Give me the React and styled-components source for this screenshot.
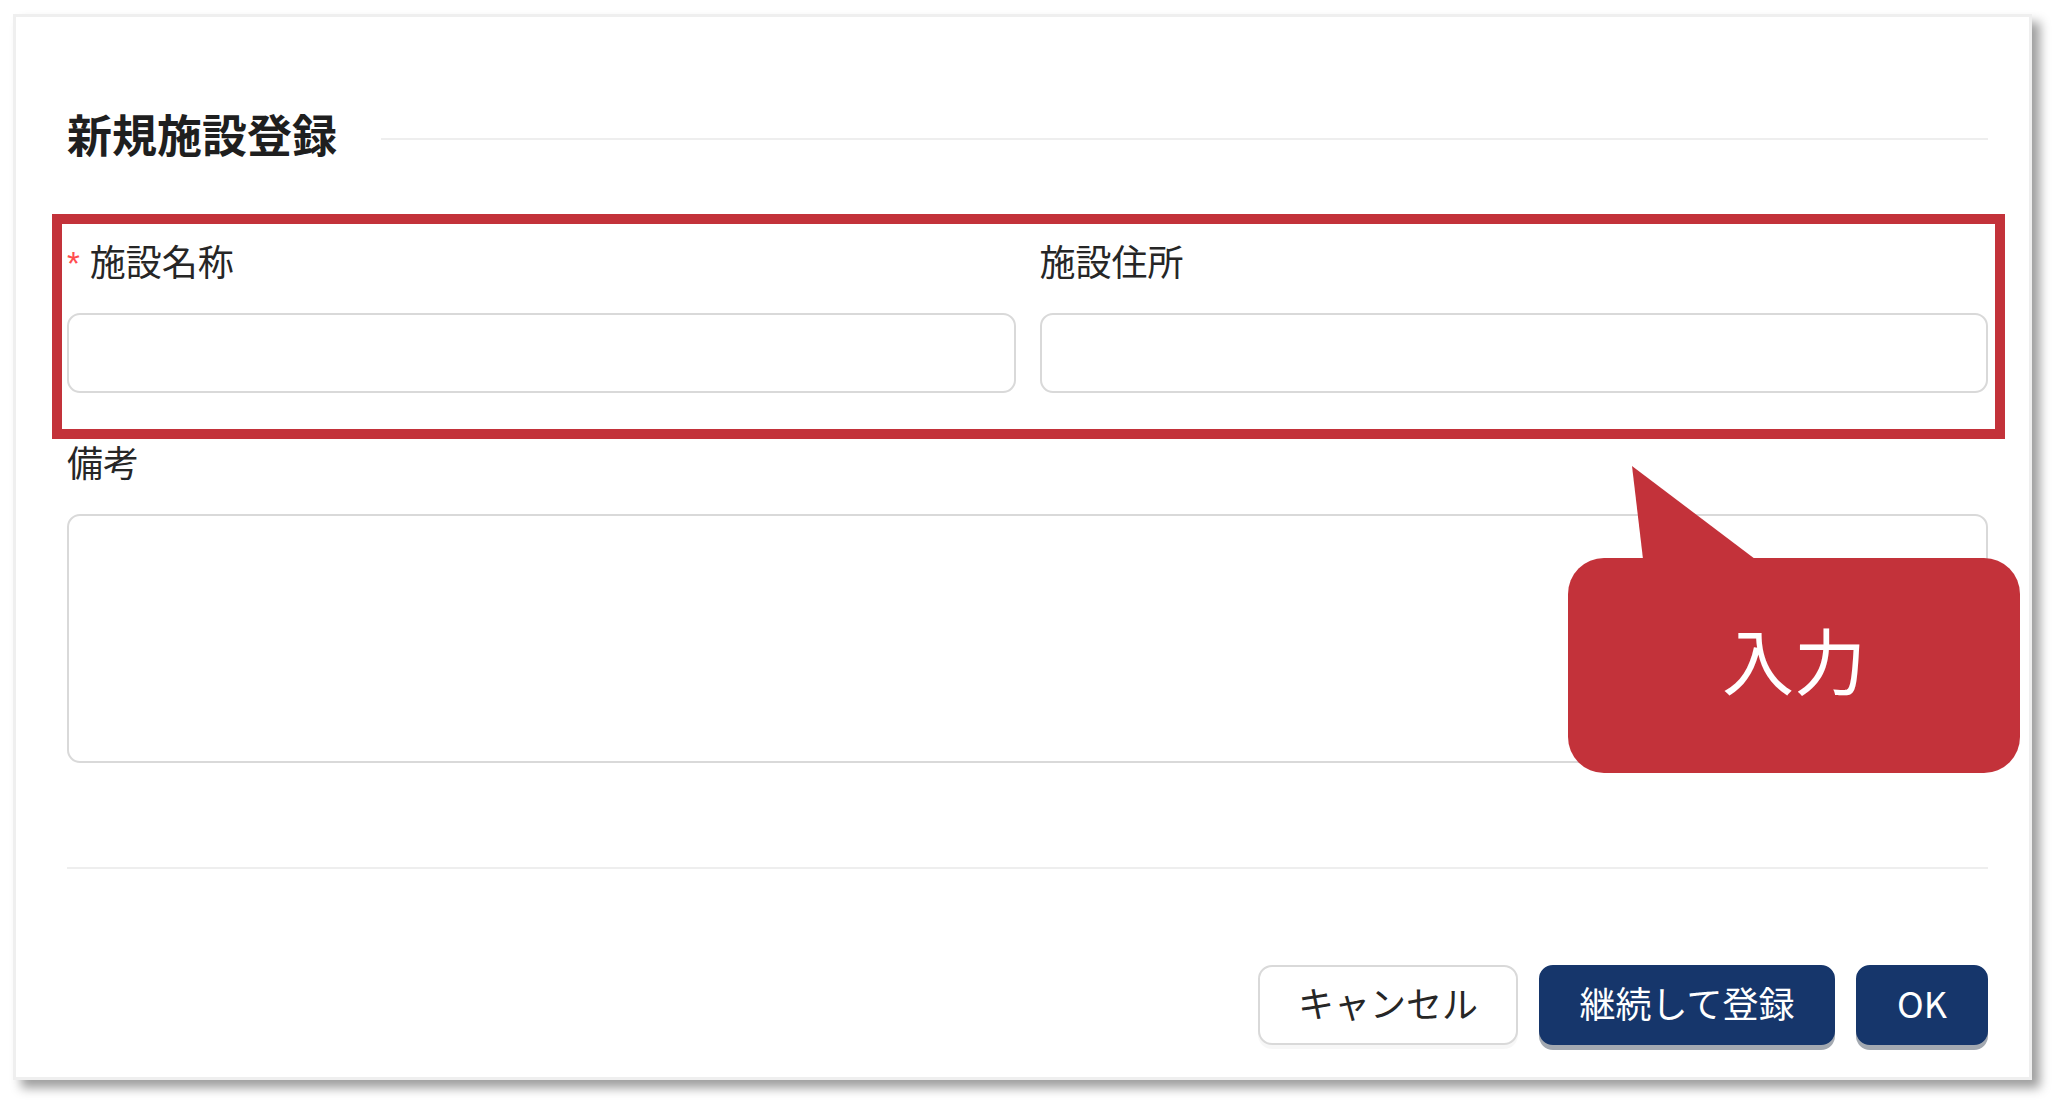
import React from 'react';
import styled, {createGlobalStyle} from 'styled-components';

const GlobalStyle = createGlobalStyle`
    html, body{
        margin: 0;
        padding: 0;
        background: #fff;
        overflow: hidden;
    }
    body{
        font-family: "Noto Sans CJK JP", "Noto Sans", sans-serif;
        color: #262626;
    }
    *{
        box-sizing: border-box;
    }
`;

const App = () =>{
    return(
        <>
            <GlobalStyle />
            <Page>
                <Card>
                    <Header>
                        <Title>新規施設登録</Title>
                        <Rule />
                    </Header>

                    <Highlight>
                        <Field>
                            <Label><Required>*</Required>施設名称</Label>
                            <Input type="text" />
                        </Field>
                        <Field>
                            <Label>施設住所</Label>
                            <Input type="text" />
                        </Field>
                    </Highlight>

                    <Field>
                        <NoteLabel>備考</NoteLabel>
                        <Note />
                    </Field>

                    <Divider />

                    <Footer>
                        <Button $w={260}>キャンセル</Button>
                        <Button $primary $w={296}>継続して登録</Button>
                        <Button $primary $w={132}>OK</Button>
                    </Footer>

                    <Callout>入力</Callout>
                </Card>
            </Page>
        </>
    )
}

const Page = styled.div`
    width: 2062px;
    height: 1113px;
    padding: 14px 0 0 13px;
`;

const Card = styled.div`
    position: relative;
    width: 2019px;
    padding: 97px 41px 32px 51px;
    background: #fff;
    border: 3px solid #efefef;
    box-shadow: 8px 8px 10px rgba(0,0,0,0.38);
`;

const Header = styled.div`
    display: flex;
    align-items: center;
`;

const Title = styled.h2`
    margin: 0;
    height: 44px;
    font-size: 45px;
    line-height: 40px;
    font-weight: 700;
    color: #1f1f1f;
    white-space: nowrap;
`;

const Rule = styled.div`
    flex: 1;
    height: 2px;
    margin: 6px 0 0 44px;
    background: #eeeeee;
`;

//the red frame round the first row
const Highlight = styled.div`
    display: grid;
    grid-template-columns: 1fr 1fr;
    column-gap: 24px;
    margin: 56px -17px 0 -15px;
    padding: 22px 7px 36px 5px;
    border: 10px solid #c3323a;
`;

const Field = styled.div`
    display: flex;
    flex-direction: column;
    min-width: 0;
`;

const Label = styled.label`
    display: flex;
    align-items: flex-start;
    height: 36px;
    margin-bottom: 31px;
    font-size: 36px;
    line-height: 29px;
    color: #262626;
`;

const NoteLabel = styled(Label)`
    margin-top: 8px;
`;

const Required = styled.span`
    font-family: "Liberation Sans", Arial, sans-serif;
    font-size: 33px;
    line-height: 33px;
    margin-right: 10px;
    margin-top: 1px;
    color: #ff4d4f;
`;

const Input = styled.input`
    display: block;
    width: 100%;
    height: 80px;
    padding: 0 20px;
    font-family: inherit;
    font-size: 32px;
    border: 2px solid #d9d9d9;
    border-radius: 13px;
    background: #fff;
    outline: none;
`;

const Note = styled.textarea`
    display: block;
    width: 100%;
    height: 249px;
    padding: 16px 20px;
    font-family: inherit;
    font-size: 32px;
    border: 2px solid #d9d9d9;
    border-radius: 13px;
    background: #fff;
    resize: none;
    outline: none;
`;

const Divider = styled.div`
    height: 2px;
    margin-top: 104px;
    background: #eeeeee;
`;

const Footer = styled.div`
    display: flex;
    justify-content: flex-end;
    gap: 21px;
    margin-top: 96px;
`;

const Button = styled.button`
    display: flex;
    align-items: center;
    justify-content: center;
    width: ${p => p.$w}px;
    height: 80px;
    padding: 0 0 7px;
    font-family: "Noto Sans CJK JP", "Noto Sans", sans-serif;
    font-size: 36px;
    line-height: 1;
    border-radius: 14px;
    cursor: pointer;
    color: ${p => p.$primary ? '#fff' : '#262626'};
    background: ${p => p.$primary ? '#16366b' : '#fff'};
    border: 2px solid ${p => p.$primary ? '#16366b' : '#d9d9d9'};
    box-shadow: ${p => p.$primary ? '0 5px 0 #a3a9b1' : '0 4px 0 rgba(0,0,0,0.03)'};
`;

//speech bubble pointing at the frame
const Callout = styled.div`
    position: absolute;
    left: 1552px;
    top: 541px;
    width: 452px;
    height: 215px;
    display: flex;
    align-items: center;
    justify-content: center;
    padding-bottom: 16px;
    border-radius: 36px;
    background: #c3323a;
    color: #fff;
    font-size: 72px;
    line-height: 1;
    &::before{
        content: '';
        position: absolute;
        left: 64px;
        top: -92px;
        width: 123px;
        height: 93px;
        background: #c3323a;
        clip-path: polygon(0 0, 11px 100%, 100% 100%);
    }
`;

export default App;
